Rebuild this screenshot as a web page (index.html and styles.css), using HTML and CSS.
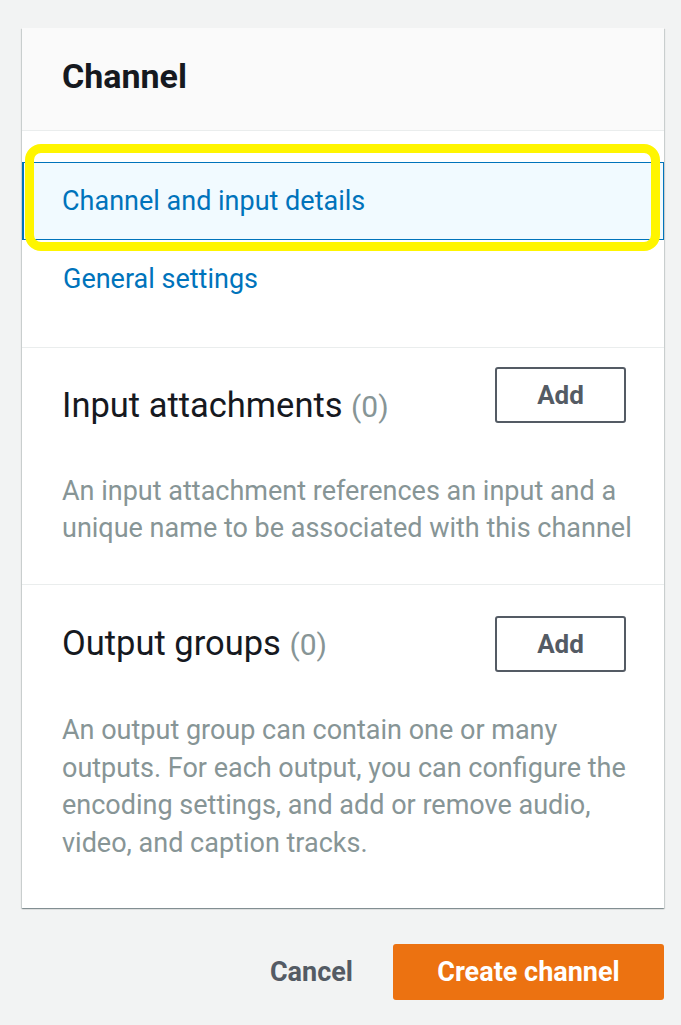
FILE: index.html
```html
<!DOCTYPE html>
<html lang="en">
<head>
<meta charset="utf-8">
<title>Channel</title>
<link rel="stylesheet" href="styles.css">
</head>
<body>
<main class="page">
  <section class="card">
    <header class="card-header">
      <h1 class="card-title">Channel</h1>
    </header>
    <nav class="nav">
      <a class="nav-item nav-item--active" href="#">Channel and input details</a>
      <a class="nav-item" href="#">General settings</a>
    </nav>
    <div class="highlight" aria-hidden="true"></div>
    <div class="section section--inputs">
      <div class="section-row">
        <h2 class="section-title">Input attachments <span class="count">(0)</span></h2>
        <button class="btn-add" type="button">Add</button>
      </div>
      <p class="section-desc">An input attachment references an input and a unique name to be associated with this channel</p>
    </div>
    <div class="section section--outputs">
      <div class="section-row">
        <h2 class="section-title">Output groups <span class="count">(0)</span></h2>
        <button class="btn-add" type="button">Add</button>
      </div>
      <p class="section-desc">An output group can contain one or many outputs. For each output, you can configure the encoding settings, and add or remove audio, video, and caption tracks.</p>
    </div>
  </section>
  <footer class="actions">
    <button class="btn-cancel" type="button">Cancel</button>
    <button class="btn-primary" type="button">Create channel</button>
  </footer>
</main>
</body>
</html>
```

FILE: styles.css
```css
html, body {
  margin: 0;
  padding: 0;
  background: #f2f3f3;
}

body {
  font-family: Roboto, "Liberation Sans", sans-serif;
  color: #16191f;
}

.page {
  padding: 28px 17px 0 22px;
}

.card {
  position: relative;
  background: #ffffff;
  box-shadow: 0 1px 1px 0 rgba(0, 28, 36, 0.3), 1px 1px 1px 0 rgba(0, 28, 36, 0.12), -1px 1px 1px 0 rgba(0, 28, 36, 0.12);
}

.card-header {
  background: #fafafa;
  border-bottom: 1px solid #eaeded;
  padding: 28px 40px 34px;
}

.card-title {
  margin: 0;
  font-size: 34px;
  line-height: 40px;
  font-weight: 700;
  color: #16191f;
}

.nav {
  display: flex;
  flex-direction: column;
  padding: 31px 0 29px;
}

.nav-item {
  display: block;
  height: 78px;
  box-sizing: border-box;
  padding: 0 40px;
  border: 1px solid transparent;
  font-size: 27px;
  line-height: 76px;
  color: #0073bb;
  text-decoration: none;
}

.nav-item--active {
  background: #f1faff;
  border-color: #0073bb;
  border-left-width: 2px;
  padding-left: 38px;
}

.highlight {
  position: absolute;
  left: 3px;
  top: 116px;
  width: 635px;
  height: 107px;
  box-sizing: border-box;
  border: 9px solid #fff500;
  border-radius: 16px;
  pointer-events: none;
}

.section {
  border-top: 1px solid #eaeded;
  padding: 0 38px 0 40px;
}

.section--inputs {
  padding-top: 19px;
  padding-bottom: 37px;
}

.section--outputs {
  padding-top: 31px;
  padding-bottom: 46px;
}

.section-row {
  display: flex;
  justify-content: space-between;
  align-items: flex-start;
}

.section-title {
  margin: 0;
  font-size: 34.5px;
  line-height: 40px;
  font-weight: 400;
  color: #16191f;
}

.section--inputs .section-title {
  margin-top: 18px;
}

.section--outputs .section-title {
  margin-top: 7px;
}

.count {
  color: #879596;
  font-size: 30px;
}

.btn-add {
  width: 131px;
  height: 56px;
  flex: none;
  box-sizing: border-box;
  border: 2px solid #545b64;
  border-radius: 3px;
  background: #ffffff;
  color: #545b64;
  font-family: inherit;
  font-size: 26px;
  font-weight: 700;
  padding: 0;
}

.section-desc {
  margin: 0 -14px 0 0;
  font-size: 27px;
  line-height: 37px;
  color: #879596;
}

.section--inputs .section-desc {
  margin-top: 46px;
}

.section--outputs .section-desc {
  margin-top: 40px;
  line-height: 37.6px;
}

.actions {
  display: flex;
  justify-content: flex-end;
  align-items: center;
  gap: 40px;
  margin-top: 36px;
}

.btn-cancel {
  background: none;
  border: none;
  padding: 0;
  font-family: inherit;
  font-size: 27px;
  font-weight: 700;
  color: #545b64;
}

.btn-primary {
  width: 271px;
  height: 56px;
  border: none;
  border-radius: 3px;
  background: #ec7211;
  color: #ffffff;
  font-family: inherit;
  font-size: 27px;
  font-weight: 700;
  padding: 0;
}
```
